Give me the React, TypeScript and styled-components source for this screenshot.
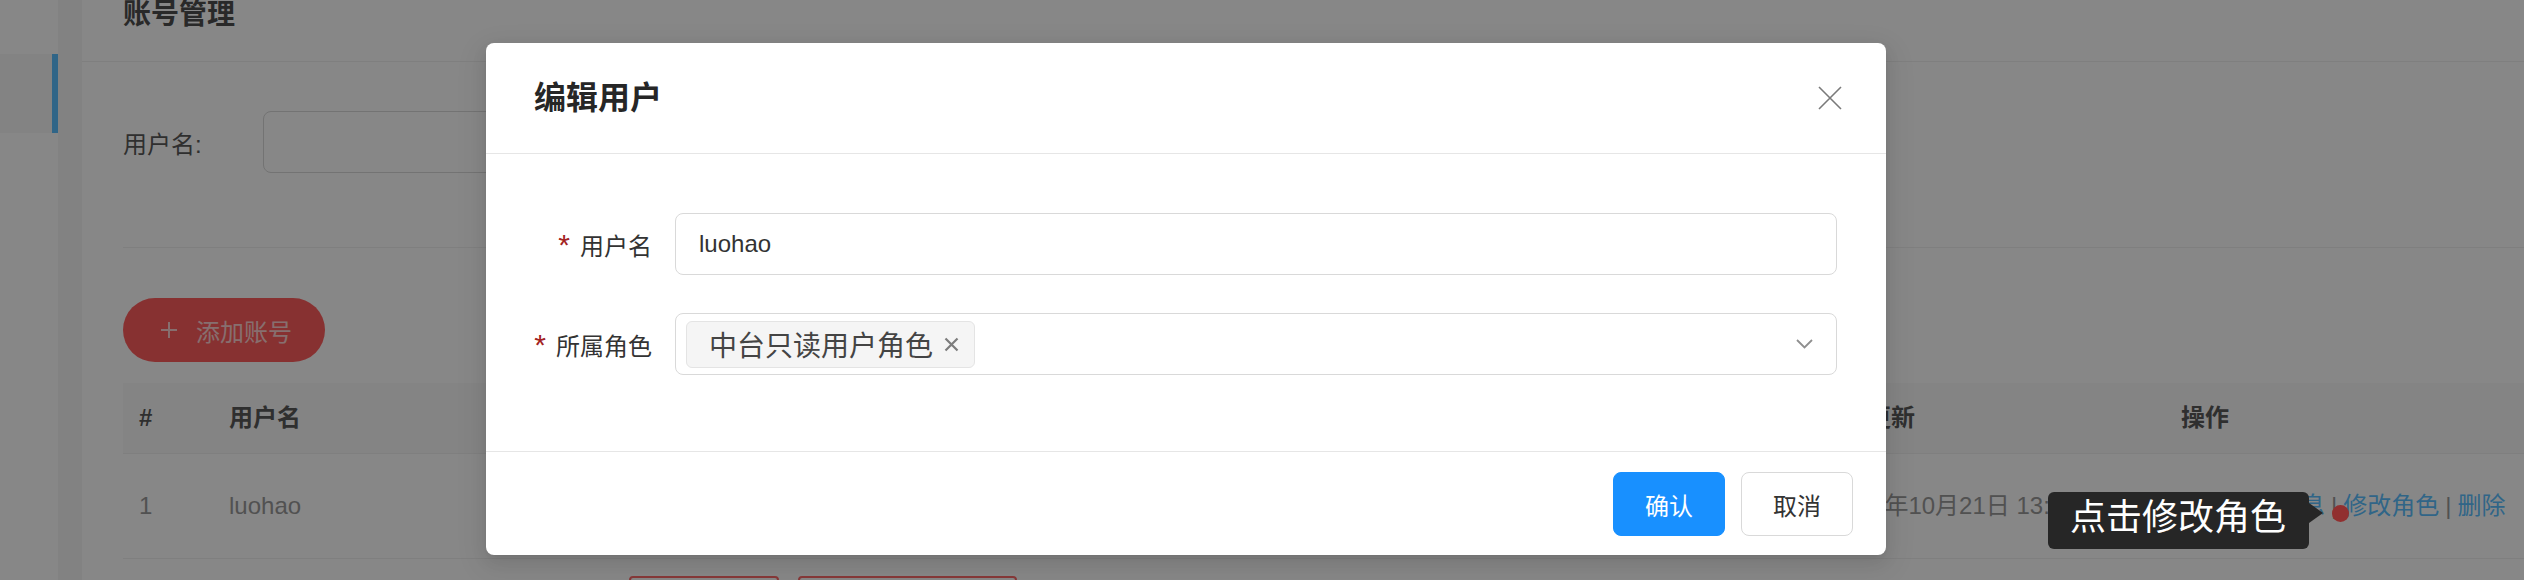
import React from "react";
import styled, { createGlobalStyle } from "styled-components";

const FONT = `"Liberation Sans", "Noto Sans CJK SC", sans-serif`;

const GlobalStyle = createGlobalStyle`
  html, body {
    margin: 0;
    padding: 0;
    width: 2524px;
    height: 580px;
    overflow: hidden;
    background: #ffffff;
    font-family: ${FONT};
  }
  * { box-sizing: border-box; }
`;

/* ---------- background page ---------- */

const Page = styled.div`
  position: relative;
  display: flex;
  width: 2524px;
  height: 580px;
  overflow: hidden;
  background: #ffffff;
`;

const Sidebar = styled.aside`
  flex: none;
  width: 58px;
  padding-top: 54px;
  background: #ffffff;
`;

const MenuItem = styled.div<{ $active?: boolean }>`
  height: 79px;
  background: ${(p) => (p.$active ? "#f7f7f7" : "transparent")};
  border-right: 6px solid ${(p) => (p.$active ? "#5bbfff" : "transparent")};
`;

const Gutter = styled.div`
  flex: none;
  width: 24px;
  background: #f5f5f5;
`;

const Content = styled.main`
  flex: 1;
  min-width: 0;
  display: flex;
  flex-direction: column;
  background: #ffffff;
  overflow: hidden;

  & > * {
    flex-shrink: 0;
  }
`;

const ContentHeader = styled.header`
  height: 62px;
  padding: 0 41px;
  border-bottom: 1px solid #f0f0f0;
`;

const PageTitle = styled.h1`
  margin: 0;
  font-size: 28px;
  line-height: 30px;
  font-weight: 700;
  color: #4f4f4f;
`;

const Inner = styled.div`
  padding-left: 41px;
  display: flex;
  flex-direction: column;

  & > * {
    flex-shrink: 0;
  }
`;

const SearchArea = styled.div`
  display: flex;
  align-items: center;
  gap: 30px;
  padding: 49px 0 74px;
  border-bottom: 1px solid #f0f0f0;
`;

const SearchLabel = styled.span`
  width: 110px;
  font-size: 24px;
  color: #5a5a5a;
`;

const SearchInput = styled.div`
  width: 460px;
  height: 62px;
  border: 1px solid #d9d9d9;
  border-radius: 8px;
  background: #ffffff;
`;

const AddButton = styled.button`
  align-self: flex-start;
  display: flex;
  align-items: center;
  gap: 19px;
  height: 64px;
  margin-top: 50px;
  padding: 0 33px 0 38px;
  border: none;
  border-radius: 32px;
  background: #ff5e5e;
  color: #ffd2d2;
  font-family: ${FONT};
  font-size: 24px;
`;

const Table = styled.div`
  margin-top: 21px;
  display: flex;
  flex-direction: column;

  & > * {
    flex-shrink: 0;
  }
`;

const TableRow = styled.div<{ $head?: boolean }>`
  display: grid;
  grid-template-columns: 90px 400px 1202px 350px 1fr;
  align-items: ${(p) => (p.$head ? "center" : "start")};
  height: ${(p) => (p.$head ? "71px" : "105px")};
  background: ${(p) => (p.$head ? "#fafafa" : "#ffffff")};
  border-bottom: 1px solid #f0f0f0;
`;

const Cell = styled.div<{ $head?: boolean; $pad?: number }>`
  padding-left: ${(p) => p.$pad ?? 16}px;
  white-space: nowrap;
  overflow: hidden;
  font-size: 24px;
  line-height: 30px;
  font-weight: ${(p) => (p.$head ? 700 : 400)};
  color: ${(p) => (p.$head ? "#595959" : "#9a9a9a")};
`;

const BodyCell = styled(Cell)`
  height: 104px;
  display: flex;
  align-items: center;
`;

const TagCell = styled(Cell)`
  display: flex;
  gap: 19px;
  padding-top: 17px;
`;

const RoleTag = styled.span<{ $w: number }>`
  width: ${(p) => p.$w}px;
  height: 40px;
  border: 2px solid #ff6b6b;
  border-radius: 4px;
`;

const Links = styled.div`
  display: flex;
  align-items: center;
  color: #5bbfff;
`;

const Sep = styled.span`
  margin: 0 6px;
  color: #9a9a9a;
`;

/* ---------- mask + modal ---------- */

const Mask = styled.div`
  position: absolute;
  inset: 0;
  z-index: 10;
  background: rgba(0, 0, 0, 0.47);
`;

const Modal = styled.section`
  position: absolute;
  left: 486px;
  top: 43px;
  z-index: 20;
  width: 1400px;
  display: flex;
  flex-direction: column;
  background: #ffffff;
  border-radius: 8px;
  box-shadow: 0 6px 16px rgba(0, 0, 0, 0.08), 0 3px 6px -4px rgba(0, 0, 0, 0.12),
    0 9px 28px 8px rgba(0, 0, 0, 0.05);
`;

const ModalHeader = styled.header`
  height: 111px;
  display: flex;
  align-items: center;
  justify-content: space-between;
  padding: 0 44px 0 48px;
  border-bottom: 1px solid #e6e6e6;
`;

const ModalTitle = styled.h2`
  margin: 0;
  font-size: 32px;
  line-height: 44px;
  font-weight: 700;
  color: #262626;
`;

const CloseButton = styled.button`
  width: 24px;
  height: 24px;
  padding: 0;
  border: none;
  background: transparent;
  display: flex;
`;

const ModalBody = styled.div`
  padding: 59px 49px 76px 48px;
`;

const FormGrid = styled.div`
  display: grid;
  grid-template-columns: 141px 1fr;
  row-gap: 38px;
  align-items: center;
`;

const Label = styled.label`
  display: flex;
  justify-content: flex-end;
  align-items: center;
  padding-right: 23px;
  font-size: 24px;
  color: #333333;
  white-space: nowrap;
`;

const Required = styled.span`
  position: relative;
  top: 1px;
  margin-right: 10px;
  color: #a32222;
  font-size: 30px;
  line-height: 1;
`;

const FieldBox = styled.div<{ $select?: boolean }>`
  height: 62px;
  display: flex;
  align-items: center;
  justify-content: space-between;
  padding: ${(p) => (p.$select ? "0 23px 0 10px" : "0 23px")};
  border: 1px solid #d9d9d9;
  border-radius: 8px;
  font-size: 24px;
  color: #333333;
`;

const Tag = styled.span`
  height: 47px;
  display: flex;
  align-items: center;
  gap: 11px;
  padding: 0 15px 0 22px;
  background: #f5f5f5;
  border: 1px solid #e4e4e4;
  border-radius: 6px;
  font-size: 28px;
  color: #444444;
`;

const ModalFooter = styled.footer`
  display: flex;
  justify-content: flex-end;
  gap: 16px;
  padding: 20px 33px 19px;
  border-top: 1px solid #e6e6e6;
`;

const Button = styled.button<{ $primary?: boolean }>`
  height: 64px;
  padding: 0 31px;
  border-radius: 8px;
  border: 1px solid ${(p) => (p.$primary ? "#1890ff" : "#d9d9d9")};
  background: ${(p) => (p.$primary ? "#1890ff" : "#ffffff")};
  color: ${(p) => (p.$primary ? "#ffffff" : "#333333")};
  font-family: ${FONT};
  font-size: 24px;
`;

/* ---------- guide tooltip ---------- */

const Tooltip = styled.div`
  position: absolute;
  left: 2048px;
  top: 492px;
  z-index: 30;
  width: 261px;
  height: 57px;
  display: flex;
  align-items: center;
  padding: 0 0 6px 22px;
  background: #262626;
  border-radius: 6px;
  color: #ffffff;
  font-size: 36px;
  line-height: 40px;
  white-space: nowrap;

  &::after {
    content: "";
    position: absolute;
    left: 100%;
    top: 11px;
    border-left: 14px solid #262626;
    border-top: 10px solid transparent;
    border-bottom: 10px solid transparent;
  }
`;

const Beacon = styled.span`
  position: absolute;
  left: 2332px;
  top: 505px;
  z-index: 30;
  width: 17px;
  height: 17px;
  border-radius: 50%;
  background: #912f2f;
`;

const CloseIcon = () => (
  <svg width="24" height="24" viewBox="0 0 24 24" fill="none">
    <path d="M1 1 L23 23 M23 1 L1 23" stroke="#7a7a7a" strokeWidth="1.6" />
  </svg>
);

const ChevronDown = () => (
  <svg width="17" height="10" viewBox="0 0 17 10" fill="none">
    <path d="M1 1 L8.5 8.5 L16 1" stroke="#8f8f8f" strokeWidth="1.8" />
  </svg>
);

const TagClose = () => (
  <svg width="15" height="15" viewBox="0 0 15 15" fill="none">
    <path d="M1.5 1.5 L13.5 13.5 M13.5 1.5 L1.5 13.5" stroke="#7d7d7d" strokeWidth="2.2" />
  </svg>
);

const PlusIcon = () => (
  <svg width="16" height="16" viewBox="0 0 16 16" fill="none">
    <path d="M8 0 V16 M0 8 H16" stroke="#ffd2d2" strokeWidth="2" />
  </svg>
);

export default function App() {
  return (
    <>
      <GlobalStyle />
      <Page>
        <Sidebar>
          <MenuItem $active />
        </Sidebar>
        <Gutter />
        <Content>
          <ContentHeader>
            <PageTitle>账号管理</PageTitle>
          </ContentHeader>
          <Inner>
            <SearchArea>
              <SearchLabel>用户名:</SearchLabel>
              <SearchInput />
            </SearchArea>
            <AddButton>
              <PlusIcon />
              添加账号
            </AddButton>
            <Table>
              <TableRow $head>
                <Cell $head>#</Cell>
                <Cell $head>用户名</Cell>
                <Cell $head>所属角色</Cell>
                <Cell $head $pad={4}>
                  最后更新
                </Cell>
                <Cell $head>操作</Cell>
              </TableRow>
              <TableRow>
                <BodyCell>1</BodyCell>
                <BodyCell>luohao</BodyCell>
                <TagCell>
                  <RoleTag $w={150} />
                </TagCell>
                <BodyCell>2021年10月21日 13:28:45</BodyCell>
                <BodyCell>
                  <Links>
                    修改基本信息<Sep>|</Sep>修改角色<Sep>|</Sep>删除
                  </Links>
                </BodyCell>
              </TableRow>
              <TableRow>
                <BodyCell />
                <BodyCell />
                <TagCell>
                  <RoleTag $w={150} />
                  <RoleTag $w={219} />
                </TagCell>
                <BodyCell />
                <BodyCell />
              </TableRow>
            </Table>
          </Inner>
        </Content>

        <Mask />

        <Modal role="dialog" aria-label="编辑用户">
          <ModalHeader>
            <ModalTitle>编辑用户</ModalTitle>
            <CloseButton aria-label="关闭">
              <CloseIcon />
            </CloseButton>
          </ModalHeader>
          <ModalBody>
            <FormGrid>
              <Label>
                <Required>*</Required>用户名
              </Label>
              <FieldBox>luohao</FieldBox>
              <Label>
                <Required>*</Required>所属角色
              </Label>
              <FieldBox $select>
                <Tag>
                  中台只读用户角色
                  <TagClose />
                </Tag>
                <ChevronDown />
              </FieldBox>
            </FormGrid>
          </ModalBody>
          <ModalFooter>
            <Button $primary>确认</Button>
            <Button>取消</Button>
          </ModalFooter>
        </Modal>

        <Tooltip>点击修改角色</Tooltip>
        <Beacon />
      </Page>
    </>
  );
}
